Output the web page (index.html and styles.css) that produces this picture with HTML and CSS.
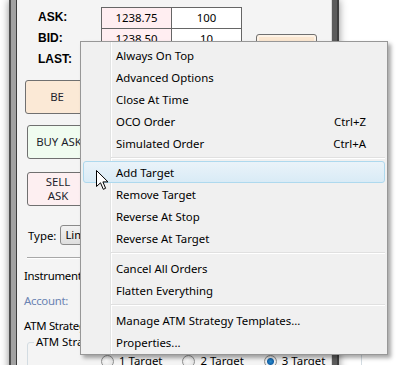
FILE: index.html
```html
<!DOCTYPE html>
<html lang="en">
<head>
    <meta charset="UTF-8">
    <title>Order Entry</title>
    <link rel="stylesheet" href="styles.css">
</head>
<body>

<div class="window">
    <div class="client">

        <div class="quote">
            <div class="labels">
                <div>ASK:</div>
                <div>BID:</div>
                <div>LAST:</div>
            </div>
            <div class="prices">
                <div class="cell pink">1238.75</div>
                <div class="cell">100</div>
                <div class="cell pink">1238.50</div>
                <div class="cell">10</div>
                <div class="cell pink"></div>
                <div class="cell"></div>
            </div>
            <button class="btn btn-side"></button>
        </div>

        <button class="btn btn-be">BE</button>
        <button class="btn btn-buy">BUY ASK</button>
        <button class="btn btn-sell">SELL<br>ASK</button>

        <div class="type-row">
            <span>Type:</span>
            <div class="combo">Limit</div>
        </div>

        <div class="rule"></div>

        <div class="field">Instrument:</div>
        <div class="field account">Account:</div>
        <div class="field">ATM Strategy:</div>

        <fieldset class="group">
            <legend>ATM Strategy</legend>
            <div class="radios">
                <label class="radio"><span class="dot"></span>1 Target</label>
                <label class="radio"><span class="dot"></span>2 Target</label>
                <label class="radio"><span class="dot checked"></span>3 Target</label>
            </div>
        </fieldset>

    </div>
</div>

<div class="menu">
    <div class="item"><span>Always On Top</span></div>
    <div class="item"><span>Advanced Options</span></div>
    <div class="item"><span>Close At Time</span></div>
    <div class="item"><span>OCO Order</span><span>Ctrl+Z</span></div>
    <div class="item"><span>Simulated Order</span><span>Ctrl+A</span></div>
    <div class="sep"></div>
    <div class="item active"><span>Add Target</span></div>
    <div class="item"><span>Remove Target</span></div>
    <div class="item"><span>Reverse At Stop</span></div>
    <div class="item"><span>Reverse At Target</span></div>
    <div class="sep wide"></div>
    <div class="item"><span>Cancel All Orders</span></div>
    <div class="item"><span>Flatten Everything</span></div>
    <div class="sep wide"></div>
    <div class="item"><span>Manage ATM Strategy Templates...</span></div>
    <div class="item"><span>Properties...</span></div>
</div>

<svg class="cursor" width="13" height="21" viewBox="0 0 13 21">
    <path d="M0.5 0.5 L0.5 16.5 L4.5 12.8 L7.3 19.3 L9.6 18.3 L6.9 11.9 L12 11.9 Z" fill="#fff" stroke="#000" stroke-width="1" stroke-linejoin="round"/>
</svg>

</body>
</html>
```

FILE: styles.css
```css
body {
    margin: 0;
    width: 397px;
    height: 365px;
    overflow: hidden;
    position: relative;
    background-color: #fff;
    font-family: 'Noto Sans', sans-serif;
    font-size: 11.4px;
    color: #000;
}

.window {
    margin-left: 9px;
    width: 330px;
    height: 380px;
    box-sizing: border-box;
    border-left: 2px solid #4e4e4e;
    border-right: 2px solid #3e3e3e;
    padding: 0 5px;
    background: linear-gradient(90deg, #a2a2a2 50%, #5c5c5c 50%);
    box-shadow: 0 0 8px rgba(0, 0, 0, 0.45);
}

.client {
    height: 100%;
    box-sizing: border-box;
    background-color: #f4f4f4;
    border-left: 1px solid #3c3c3c;
    border-right: 1px solid #d8d8d8;
    display: flex;
    flex-direction: column;
    align-items: flex-start;
}

.quote {
    display: flex;
    align-items: flex-start;
    padding-top: 7px;
}

.labels {
    width: 63px;
    padding-left: 21px;
    font-family: 'Liberation Sans', sans-serif;
    font-weight: bold;
    font-size: 12px;
}

.labels div {
    height: 21px;
    line-height: 21px;
}

.prices {
    display: grid;
    grid-template-columns: 69px 69px;
    gap: 1px;
    background-color: #666;
    border: 1px solid #666;
}

.cell {
    height: 20px;
    line-height: 20px;
    text-align: center;
    background-color: #fff;
}

.cell.pink {
    background-color: #ffeef1;
}

.btn {
    font-family: 'Noto Sans', sans-serif;
    font-size: 11.4px;
    color: #1c1c2c;
    border: 1px solid #707070;
    border-radius: 3px;
    padding: 0;
    line-height: 14px;
}

.btn-side {
    width: 61px;
    height: 30px;
    margin: 27px 0 0 14px;
    background-color: #fbe7d1;
    box-shadow: inset 0 0 0 2px #fdf3e7;
}

.btn-be {
    width: 64px;
    height: 34px;
    margin: 9px 0 0 8px;
    background-color: #fbe9d6;
}

.btn-buy {
    width: 64px;
    height: 34px;
    margin: 11px 0 0 10px;
    background-color: #f0fcf0;
}

.btn-sell {
    width: 62px;
    height: 34px;
    margin: 13px 0 0 10px;
    background-color: #fdeff1;
}

.type-row {
    display: flex;
    align-items: center;
    gap: 4px;
    margin: 19px 0 0 11px;
}

.combo {
    width: 80px;
    height: 20px;
    box-sizing: border-box;
    line-height: 18px;
    padding-left: 4px;
    border: 1px solid #8a8a8a;
    border-radius: 3px;
    background: linear-gradient(#f2f2f2, #dedede);
}

.rule {
    width: 290px;
    margin: 12px 0 0 10px;
    border-top: 1px solid #a8a8a8;
    border-bottom: 1px solid #fff;
}

.field {
    margin: 8px 0 0 7px;
    height: 18px;
    line-height: 18px;
    letter-spacing: -0.3px;
}

.field + .field {
    margin-top: 7px;
}

.account {
    color: #6a83b2;
}

.group {
    margin: 0 0 0 10px;
    padding: 5px 0 0 73px;
    width: 260px;
    border: 1px solid #d3dce2;
    border-radius: 3px;
}

.group legend {
    padding: 0 2px;
    margin-left: -67px;
    line-height: 14px;
}

.radios {
    display: flex;
    gap: 20px;
    line-height: 14px;
}

.radio {
    display: flex;
    align-items: center;
    gap: 5px;
}

.dot {
    width: 11px;
    height: 11px;
    border: 1px solid #8e8f8f;
    border-radius: 50%;
    background: radial-gradient(circle at 40% 35%, #fff, #d8d8d8);
}

.dot.checked {
    background: radial-gradient(circle, #2b8fd0 0, #1462a8 3px, #f4f4f4 4px, #dcdcdc 6px);
}

.menu {
    position: absolute;
    left: 80px;
    top: 41px;
    width: 308px;
    box-sizing: border-box;
    padding: 2px 2px 1px;
    border: 1px solid #979797;
    background: linear-gradient(90deg, transparent 29px, #e2e3e3 29px, #e2e3e3 30px, #fff 30px, #fff 31px, transparent 31px), #f0f0f0;
    box-shadow: 3px 3px 4px rgba(0, 0, 0, 0.35);
}

.item {
    height: 22px;
    box-sizing: border-box;
    display: flex;
    align-items: center;
    justify-content: space-between;
    padding: 0 18px 0 32px;
    border: 1px solid transparent;
    border-radius: 3px;
}

.item.active {
    border-color: #aed9ee;
    background: linear-gradient(#eaf3f9, #d9ebf6);
}

.sep {
    height: 7px;
    margin-left: 28px;
    box-sizing: border-box;
    padding-top: 3px;
}

.sep::after {
    content: "";
    display: block;
    border-top: 1px solid #e0e0e0;
    border-bottom: 1px solid #fff;
}

.sep.wide {
    height: 8px;
}

.cursor {
    position: absolute;
    left: 96px;
    top: 170px;
}
```
